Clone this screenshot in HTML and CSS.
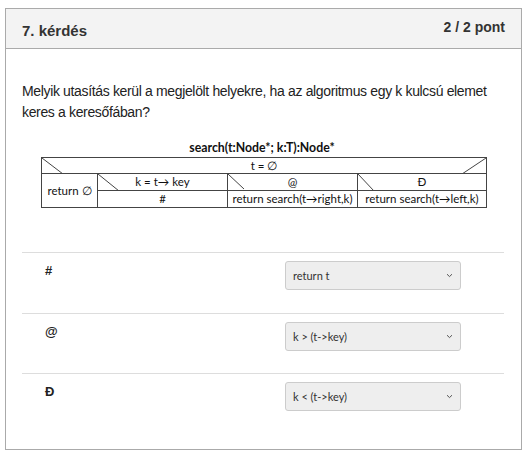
FILE: index.html
```html
<!DOCTYPE html>
<html lang="hu">
<head>
<meta charset="utf-8">
<title>7. kérdés</title>
<link rel="stylesheet" href="styles.css">
</head>
<body>
<div class="card">
  <div class="card-head">
    <h2 class="title">7. kérdés</h2>
    <div class="points">2 / 2 pont</div>
  </div>
  <div class="card-body">
    <p class="question">Melyik utasítás kerül a megjelölt helyekre, ha az algoritmus egy k kulcsú elemet keres a keresőfában?</p>
    <div class="diagram">
      <div class="diagram-title">search(t:Node*; k:T):Node*</div>
      <table class="struct">
        <colgroup>
          <col class="c1"><col class="c2"><col class="c3"><col class="c4">
        </colgroup>
        <tr class="r1">
          <td colspan="4" class="diag">
            <svg class="d-left" width="24" height="16"><line x1="0" y1="0" x2="21" y2="16"/></svg>
            <svg class="d-right" width="26" height="16"><line x1="26" y1="0" x2="2" y2="16"/></svg>
            t = ∅
          </td>
        </tr>
        <tr class="r2">
          <td rowspan="2">return ∅</td>
          <td class="diag"><svg class="d-left" width="22" height="17"><line x1="0" y1="0" x2="21" y2="17"/></svg>k = t→ key</td>
          <td class="diag"><svg class="d-left" width="18" height="17"><line x1="0" y1="0" x2="16" y2="15"/></svg>@</td>
          <td class="diag"><svg class="d-left" width="18" height="17"><line x1="0" y1="0" x2="16" y2="17"/></svg>Đ</td>
        </tr>
        <tr class="r3">
          <td>#</td>
          <td>return search(t→right,k)</td>
          <td>return search(t→left,k)</td>
        </tr>
      </table>
    </div>
    <div class="answers">
      <div class="answer">
        <div class="label">#</div>
        <div class="select"><span>return t</span><svg class="chev" width="7" height="5" viewBox="0 0 7 5"><path d="M1 1.2 L3.5 3.6 L6 1.2"/></svg></div>
      </div>
      <div class="answer">
        <div class="label">@</div>
        <div class="select"><span>k &gt; (t-&gt;key)</span><svg class="chev" width="7" height="5" viewBox="0 0 7 5"><path d="M1 1.2 L3.5 3.6 L6 1.2"/></svg></div>
      </div>
      <div class="answer">
        <div class="label">Đ</div>
        <div class="select"><span>k &lt; (t-&gt;key)</span><svg class="chev" width="7" height="5" viewBox="0 0 7 5"><path d="M1 1.2 L3.5 3.6 L6 1.2"/></svg></div>
      </div>
    </div>
  </div>
</div>
</body>
</html>
```
FILE: styles.css
```css
* { box-sizing: border-box; }
body {
  margin: 0;
  background: #fff;
  font-family: "Liberation Sans", Arial, sans-serif;
  color: #222;
}
.card {
  margin: 8px 0 0 5px;
  width: 517px;
  height: 442px;
  border: 1px solid #aaa;
  background: #fff;
}
.card-head {
  height: 40px;
  background: #f3f3f3;
  border-bottom: 1px solid #aaa;
  display: flex;
  justify-content: space-between;
  padding: 0 16px 0 16px;
}
.title {
  margin: 0;
  font-size: 15px;
  font-weight: bold;
  color: #333;
  line-height: 18px;
  padding-top: 13px;
}
.points {
  font-size: 14px;
  font-weight: bold;
  color: #333;
  line-height: 16px;
  padding-top: 10px;
}
.card-body {
  padding: 32px 17px 0 16px;
}
.question {
  margin: 0;
  font-size: 14px;
  letter-spacing: -0.35px;
  line-height: 21px;
  color: #222;
}
.diagram {
  margin-top: 18px;
  font-family: "Lato", "Open Sans", sans-serif;
  color: #111;
}
.diagram-title {
  text-align: center;
  font-weight: bold;
  font-size: 12.3px;
  line-height: 14px;
  padding-right: 2px;
  margin-bottom: 2px;
}
.struct {
  border-collapse: collapse;
  table-layout: fixed;
  width: 445px;
  margin-left: 19px;
  font-size: 11.5px;
}
.c1 { width: 56px; }
.c2 { width: 130px; }
.c3 { width: 130px; }
.c4 { width: 129px; }
.struct td {
  border: 1px solid #444;
  padding: 0;
  text-align: center;
  line-height: 14px;
  white-space: nowrap;
}
.r1 td { height: 16px; }
.r2 td { height: 17px; }
.r3 td { height: 17px; }
.diag { position: relative; }
.diag svg {
  position: absolute;
  top: 0;
  stroke: #444;
  stroke-width: 1;
}
.d-left { left: 0; }
.d-right { right: 0; }
.answers {
  margin-top: 44px;
}
.answer {
  display: flex;
  align-items: flex-start;
  border-top: 1px solid #ddd;
  height: 61px;
  padding-top: 8px;
}
.answer + .answer { height: 60px; }
.label {
  width: 263px;
  padding-left: 23px;
  padding-top: 1px;
  font-size: 13px;
  font-weight: bold;
  color: #222;
  line-height: 18px;
}
.select {
  position: relative;
  width: 176px;
  height: 29px;
  border: 1px solid #ccc;
  border-radius: 3px;
  background: #eee;
  font-family: "Lato", "Open Sans", sans-serif;
  font-size: 11px;
  color: #333;
  padding-left: 7px;
  display: flex;
  align-items: center;
}
.chev {
  position: absolute;
  right: 7px;
  top: 11px;
  fill: none;
  stroke: #555;
  stroke-width: 1;
}
```
